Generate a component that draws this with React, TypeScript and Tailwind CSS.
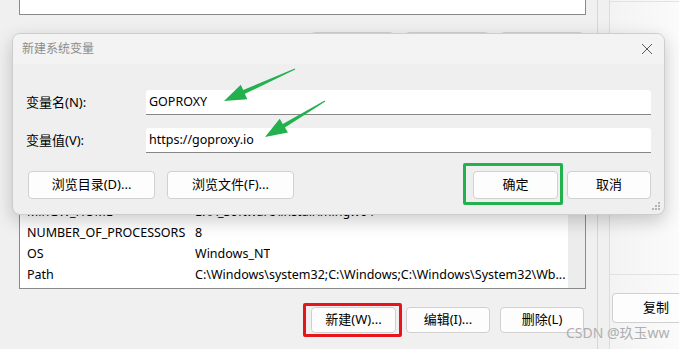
import React from "react";

type Arrow = { tx: number; ty: number; px: number; py: number };

// polygon for a tapered arrow, tail -> tip
function arrowPoints({ tx, ty, px, py }: Arrow) {
  const dx = px - tx;
  const dy = py - ty;
  const len = Math.hypot(dx, dy);
  const ux = dx / len;
  const uy = dy / len;
  const nx = -uy;
  const ny = ux;
  const head = 22;
  const half = 8;
  const bx = px - head * ux;
  const by = py - head * uy;
  const pts: [number, number][] = [
    [tx + 0.6 * nx, ty + 0.6 * ny],
    [bx + 2 * nx, by + 2 * ny],
    [bx + half * nx, by + half * ny],
    [px, py],
    [bx - half * nx, by - half * ny],
    [bx - 2 * nx, by - 2 * ny],
    [tx - 0.6 * nx, ty - 0.6 * ny],
  ];
  return pts.map(([x, y]) => `${x.toFixed(1)},${y.toFixed(1)}`).join(" ");
}

const arrows: Arrow[] = [
  { tx: 295, ty: 69, px: 224, py: 101 },
  { tx: 325, ty: 101, px: 265, py: 137 },
];

const rows = [
  ["MinGW_HOME", "E:\\A_Software\\install\\mingw64"],
  ["NUMBER_OF_PROCESSORS", "8"],
  ["OS", "Windows_NT"],
  ["Path", "C:\\Windows\\system32;C:\\Windows;C:\\Windows\\System32\\Wb..."],
];

function WinButton({ label, className = "" }: { label: string; className?: string }) {
  return (
    <div
      className={`flex items-center justify-center rounded-[4px] border border-[#d0d0d0] bg-[#fdfdfd] text-[13px] text-black ${className}`}
    >
      {label}
    </div>
  );
}

export default function App() {
  return (
    <div className="relative flex h-[349px] w-[679px] overflow-hidden bg-[#f0f0f0] font-[family-name:'Noto_Sans','Noto_Sans_CJK_SC',sans-serif] text-black">
      {/* back window: environment variables */}
      <div className="flex w-[598px] shrink-0 flex-col border-r border-[#d6d6d6]">
        <div className="ml-[19px] h-[15px] w-[567px] border-x border-b border-[#8a8a8a] bg-white" />

        <div className="mt-[17px] ml-[311px] flex gap-[11px]">
          <WinButton label="新建(N)..." className="h-[27px] w-[83px]" />
          <WinButton label="编辑(E)..." className="h-[27px] w-[84px]" />
          <WinButton label="删除(D)" className="h-[27px] w-[84px]" />
        </div>

        <div className="mt-[31px] ml-[19px] flex h-[199px] w-[567px] border border-[#8a8a8a] bg-white">
          <div className="flex flex-1 flex-col justify-end pb-[2px] text-[12.5px]">
            {rows.map(([name, value]) => (
              <div key={name} className="flex h-[21px] items-center whitespace-nowrap">
                <span className="w-[175px] shrink-0 pl-[7px]">{name}</span>
                <span className="overflow-hidden">{value}</span>
              </div>
            ))}
          </div>
          <div className="w-[17px] shrink-0 bg-[#ececec]" />
        </div>

        <div className="mt-[18px] ml-[311px] flex gap-[10px]">
          <WinButton label="新建(W)..." className="h-[26px] w-[85px]" />
          <WinButton label="编辑(I)..." className="h-[26px] w-[84px]" />
          <WinButton label="删除(L)" className="h-[26px] w-[84px]" />
        </div>
      </div>

      <div className="w-[12px] shrink-0 border-r border-[#dcdcdc]" />

      {/* window behind on the right */}
      <div className="flex flex-1 flex-col bg-gradient-to-r from-[#f3f3f3] to-[#fbfbfb]">
        <div className="mt-[1px] h-px bg-[#e2e2e2]" />
        <div className="mt-[272px] h-px bg-[#e2e2e2]" />
        <div className="mt-[18px] ml-[2px] flex h-[30px] items-center justify-center rounded-l-[4px] border border-r-0 border-[#d0d0d0] bg-[#fdfdfd] pl-[20px] text-[13px]">
          复制
        </div>
      </div>

      {/* dialog */}
      <div className="absolute top-[33px] left-[12px] flex h-[182px] w-[653px] flex-col overflow-hidden rounded-[8px] border border-[#cdcdcd] bg-[#efefef] shadow-[0_6px_18px_rgba(0,0,0,0.2)]">
        <div className="flex h-[30px] shrink-0 items-center justify-between bg-[#f3f3f3] pl-[9px] pr-[10px]">
          <span className="text-[12px] text-[#8c8c8c]">新建系统变量</span>
          <svg width="12" height="12" viewBox="0 0 12 12" className="mr-[1px]">
            <path d="M1 1L11 11M11 1L1 11" stroke="#5a5a5a" strokeWidth="1" />
          </svg>
        </div>
        <div className="flex flex-col px-[13px] pt-[26px]">
          <div className="flex h-[25px] items-center">
            <span className="w-[120px] text-[13px]">变量名(N):</span>
            <div className="flex h-[25px] flex-1 items-center rounded-t-[3px] border-b border-[#868686] bg-white pl-[3px] text-[12.5px]">
              GOPROXY
            </div>
          </div>
          <div className="mt-[13px] flex h-[25px] items-center">
            <span className="w-[120px] text-[13px]">变量值(V):</span>
            <div className="flex h-[25px] flex-1 items-center rounded-t-[3px] border-b border-[#868686] bg-white pl-[3px] text-[12.5px]">
              https://goproxy.io
            </div>
          </div>
          <div className="mt-[18px] flex h-[28px] items-center pl-[2px]">
            <WinButton label="浏览目录(D)..." className="h-[28px] w-[127px]" />
            <WinButton label="浏览文件(F)..." className="ml-[12px] h-[28px] w-[127px]" />
            <WinButton label="确定" className="ml-auto h-[28px] w-[85px]" />
            <WinButton label="取消" className="ml-[9px] h-[28px] w-[84px]" />
          </div>
        </div>
        <svg width="10" height="10" viewBox="0 0 10 10" className="absolute right-[3px] bottom-[3px]">
          <rect x="7" y="1" width="2" height="2" fill="#b5b5b5" />
          <rect x="4" y="4" width="2" height="2" fill="#b5b5b5" />
          <rect x="7" y="4" width="2" height="2" fill="#b5b5b5" />
          <rect x="1" y="7" width="2" height="2" fill="#b5b5b5" />
          <rect x="4" y="7" width="2" height="2" fill="#b5b5b5" />
          <rect x="7" y="7" width="2" height="2" fill="#b5b5b5" />
        </svg>
      </div>

      {/* annotations */}
      <div className="absolute top-[163px] left-[463px] h-[42px] w-[100px] rounded-[2px] border-[3px] border-[#22b14c]" />
      <div className="absolute top-[303px] left-[303px] h-[34px] w-[99px] rounded-[2px] border-[3px] border-[#e8141c]" />
      <svg className="pointer-events-none absolute top-0 left-0" width="679" height="349">
        {arrows.map((a, i) => (
          <polygon key={i} points={arrowPoints(a)} fill="#22b14c" />
        ))}
      </svg>

      <div className="absolute top-[322px] left-[566px] text-[14px] text-[#a8a8a8] opacity-90">
        CSDN @玖玉ww
      </div>
    </div>
  );
}
